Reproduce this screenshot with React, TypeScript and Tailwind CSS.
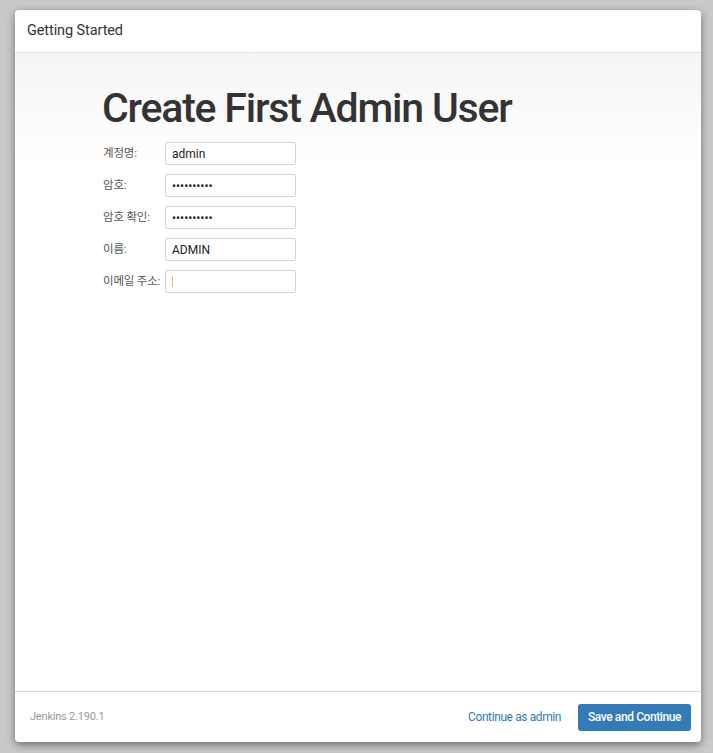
import React from 'react';

const fields = [
  { label: '계정명:', value: 'admin', type: 'text' },
  { label: '암호:', value: '1234567890', type: 'password' },
  { label: '암호 확인:', value: '1234567890', type: 'password' },
  { label: '이름:', value: 'ADMIN', type: 'text' },
  { label: '이메일 주소:', value: '', type: 'text', caret: true },
];

export default function App() {
  return (
    <div
      className="h-[753px] w-full overflow-hidden bg-[#c9c9c9] pl-[15px] pt-[10px]"
      style={{ fontFamily: 'Roboto, "Noto Sans CJK KR", sans-serif' }}
    >
      <div className="flex h-[732px] w-[686px] flex-col rounded-[4px] bg-white shadow-[0_3px_9px_rgba(0,0,0,0.45)]">
        {/* Header */}
        <div className="flex h-[43px] shrink-0 items-center border-b border-[#e5e5e5] px-[12px]">
          <h4 className="text-[14.5px] font-normal tracking-[-0.1px] text-[#333]">Getting Started</h4>
        </div>

        {/* Body */}
        <div className="flex-1 bg-gradient-to-b from-[#f5f5f5] via-white via-[110px] to-white pl-[87px] pt-[32px]">
          <h1 className="text-[41px] leading-[46px] font-medium tracking-[-1.2px] text-[#333]">
            Create First Admin User
          </h1>
          <div className="mt-[11px] flex flex-col gap-[9px] pl-[1px]">
            {fields.map((f) => (
              <div key={f.label} className="flex items-center">
                <label className="w-[62px] text-[11.5px] tracking-[-0.2px] text-[#555]">{f.label}</label>
                <div className="relative">
                  <input
                    readOnly
                    type={f.type}
                    defaultValue={f.value}
                    className="block h-[23px] w-[131px] rounded-[2px] border border-[#d4d4d4] bg-white px-[6px] text-[12px] text-[#222] outline-none"
                  />
                  {f.caret && (
                    <span className="absolute left-[7px] top-[6px] h-[11px] w-px bg-[#f3b67a]" />
                  )}
                </div>
              </div>
            ))}
          </div>
        </div>

        {/* Footer */}
        <div className="flex h-[51px] shrink-0 items-center border-t border-[#d6d6d6] pl-[15px] pr-[10px]">
          <span className="text-[11px] tracking-[-0.2px] text-[#999]">Jenkins 2.190.1</span>
          <div className="ml-auto flex items-center gap-[17px]">
            <a href="#" className="text-[12px] tracking-[-0.4px] text-[#337ab7]">
              Continue as admin
            </a>
            <button className="h-[27px] w-[113px] rounded-[3px] bg-[#337ab7] text-[12px] font-medium tracking-[-0.4px] text-white">
              Save and Continue
            </button>
          </div>
        </div>
      </div>
    </div>
  );
}
